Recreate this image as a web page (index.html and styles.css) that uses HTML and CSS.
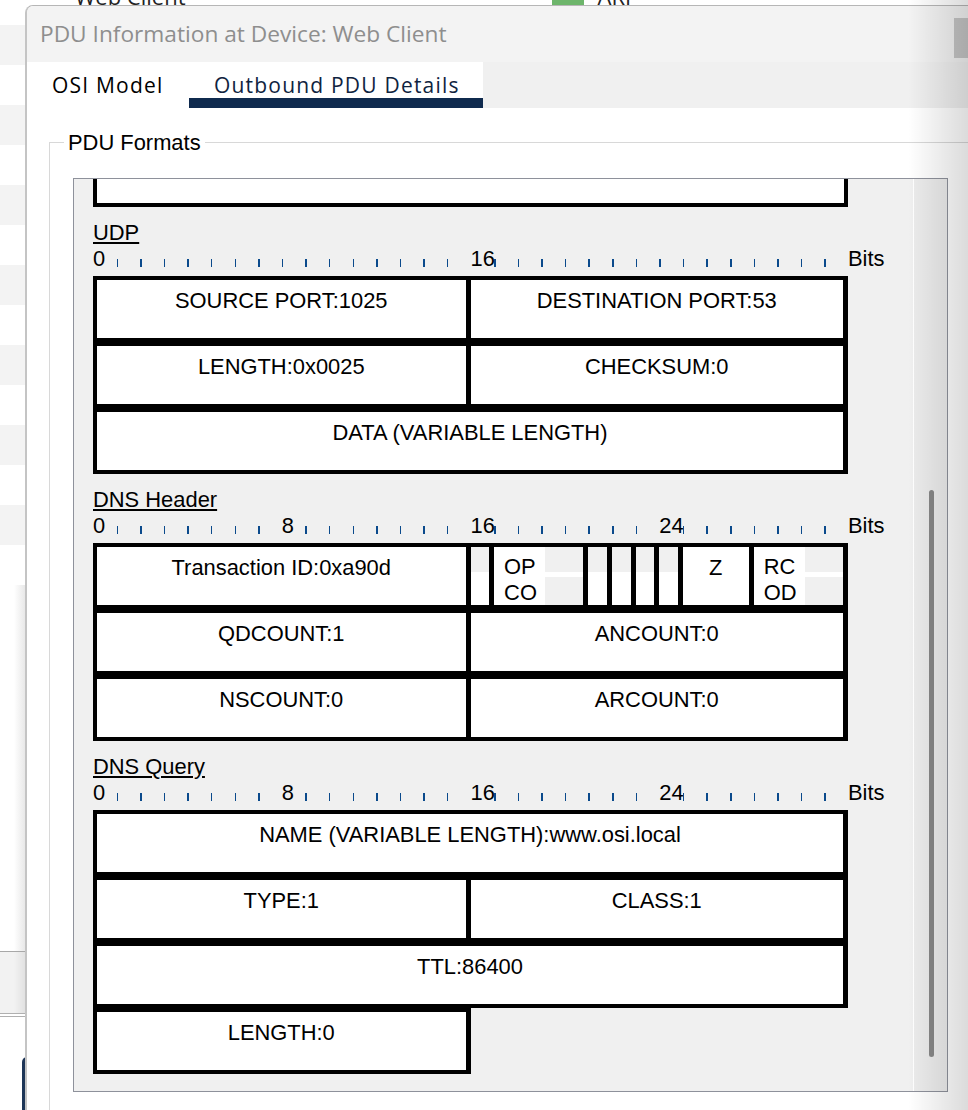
FILE: index.html
```html
<!DOCTYPE html>
<html>
<head>
<meta charset="utf-8">
<link rel="stylesheet" href="styles.css">
</head>
<body>
<div class="app">
  <div class="bg">
    <div class="bg-top">
      <span class="bg-webclient">Web Client</span>
      <span class="bg-green"></span>
      <span class="bg-arp">ARP</span>
    </div>
    <div class="bg-rows">
      <div class="bg-row"></div><div class="bg-row"></div><div class="bg-row"></div><div class="bg-row"></div>
      <div class="bg-row"></div><div class="bg-row"></div><div class="bg-row"></div><div class="bg-row"></div>
      <div class="bg-row"></div><div class="bg-row"></div><div class="bg-row"></div><div class="bg-row"></div>
      <div class="bg-row"></div><div class="bg-row"></div>
    </div>
    <div class="bg-gap"></div>
    <div class="bg-panel"></div>
    <div class="bg-rule"></div>
    <div class="bg-foot"><span class="bg-navy"></span></div>
  </div>

  <div class="dialog">
    <div class="titlebar">
      <span class="title">PDU Information at Device: Web Client</span>
      <span class="title-knob"></span>
    </div>
    <div class="tabs">
      <div class="tab tab-osi">OSI Model</div>
      <div class="tab tab-active">Outbound PDU Details</div>
      <div class="tab-fill"></div>
    </div>
    <div class="dlg-body">
      <fieldset class="group">
        <legend class="group-title">PDU Formats</legend>
        <div class="pane">
          <div class="pane-content">
            <div class="partial"></div>

            <div class="sec-title">UDP</div>
            <div class="ruler">
              <div class="scale">
                <span class="n">0</span><span class="t"></span><span class="t"></span><span class="t"></span>
                <span class="t"></span><span class="t"></span><span class="t"></span><span class="t"></span>
                <span class="t"></span><span class="t"></span><span class="t"></span><span class="t"></span>
                <span class="t"></span><span class="t"></span><span class="t"></span><span class="t"></span>
                <span class="n">16</span><span class="t"></span><span class="t"></span><span class="t"></span>
                <span class="t"></span><span class="t"></span><span class="t"></span><span class="t"></span>
                <span class="t"></span><span class="t"></span><span class="t"></span><span class="t"></span>
                <span class="t"></span><span class="t"></span><span class="t"></span><span class="t"></span>
              </div>
              <span class="bits">Bits</span>
            </div>
            <div class="pdu">
              <div class="row">
                <div class="c s16">SOURCE PORT:1025</div>
                <div class="c s16">DESTINATION PORT:53</div>
              </div>
              <div class="row">
                <div class="c s16">LENGTH:0x0025</div>
                <div class="c s16">CHECKSUM:0</div>
              </div>
              <div class="row">
                <div class="c s32">DATA (VARIABLE LENGTH)</div>
              </div>
            </div>

            <div class="sec-title">DNS Header</div>
            <div class="ruler">
              <div class="scale">
                <span class="n">0</span><span class="t"></span><span class="t"></span><span class="t"></span>
                <span class="t"></span><span class="t"></span><span class="t"></span><span class="t"></span>
                <span class="n">8</span><span class="t"></span><span class="t"></span><span class="t"></span>
                <span class="t"></span><span class="t"></span><span class="t"></span><span class="t"></span>
                <span class="n">16</span><span class="t"></span><span class="t"></span><span class="t"></span>
                <span class="t"></span><span class="t"></span><span class="t"></span><span class="t"></span>
                <span class="n">24</span><span class="t"></span><span class="t"></span><span class="t"></span>
                <span class="t"></span><span class="t"></span><span class="t"></span><span class="t"></span>
              </div>
              <span class="bits">Bits</span>
            </div>
            <div class="pdu">
              <div class="row">
                <div class="c s16">Transaction ID:0xa90d</div>
                <div class="c s1 flag"></div>
                <div class="c s4 split"><span class="split-text">OP<br>CO</span><span class="split-fill"></span></div>
                <div class="c s1 flag"></div>
                <div class="c s1 flag"></div>
                <div class="c s1 flag"></div>
                <div class="c s1 flag"></div>
                <div class="c s3">Z</div>
                <div class="c s4 split"><span class="split-text">RC<br>OD</span><span class="split-fill"></span></div>
              </div>
              <div class="row">
                <div class="c s16">QDCOUNT:1</div>
                <div class="c s16">ANCOUNT:0</div>
              </div>
              <div class="row">
                <div class="c s16">NSCOUNT:0</div>
                <div class="c s16">ARCOUNT:0</div>
              </div>
            </div>

            <div class="sec-title">DNS Query</div>
            <div class="ruler">
              <div class="scale">
                <span class="n">0</span><span class="t"></span><span class="t"></span><span class="t"></span>
                <span class="t"></span><span class="t"></span><span class="t"></span><span class="t"></span>
                <span class="n">8</span><span class="t"></span><span class="t"></span><span class="t"></span>
                <span class="t"></span><span class="t"></span><span class="t"></span><span class="t"></span>
                <span class="n">16</span><span class="t"></span><span class="t"></span><span class="t"></span>
                <span class="t"></span><span class="t"></span><span class="t"></span><span class="t"></span>
                <span class="n">24</span><span class="t"></span><span class="t"></span><span class="t"></span>
                <span class="t"></span><span class="t"></span><span class="t"></span><span class="t"></span>
              </div>
              <span class="bits">Bits</span>
            </div>
            <div class="pdu">
              <div class="row">
                <div class="c s32">NAME (VARIABLE LENGTH):www.osi.local</div>
              </div>
              <div class="row">
                <div class="c s16">TYPE:1</div>
                <div class="c s16">CLASS:1</div>
              </div>
              <div class="row">
                <div class="c s32">TTL:86400</div>
              </div>
              <div class="row">
                <div class="c s16">LENGTH:0</div>
              </div>
            </div>
          </div>
          <div class="vscroll"><span class="thumb"></span></div>
        </div>
      </fieldset>
    </div>
  </div>

  <div class="edge-fade"></div>
</div>
</body>
</html>
```

FILE: styles.css
```css
html, body {
  margin: 0;
  padding: 0;
  overflow: hidden;
  background: #ffffff;
}

body {
  font-family: "Liberation Sans", Arial, sans-serif;
  color: #000;
}

.app {
  position: relative;
  width: 968px;
  height: 1110px;
  overflow: hidden;
  background: #ffffff;
}

/* ---------- background application (behind dialog) ---------- */
.bg {
  display: flex;
  flex-direction: column;
  height: 1110px;
}

.bg-top {
  height: 25px;
  flex: none;
  display: flex;
  align-items: flex-start;
  font-family: "Open Sans", sans-serif;
  font-size: 22px;
  line-height: 24px;
  color: #222;
}

.bg-webclient {
  margin-left: 75px;
  margin-top: -16px;
}

.bg-green {
  margin-left: 366px;
  margin-top: -20px;
  width: 32px;
  height: 25px;
  background: #6db56b;
}

.bg-arp {
  margin-left: 14px;
  margin-top: -16px;
}

.bg-rows {
  display: flex;
  flex-direction: column;
  flex: none;
}

.bg-row {
  height: 40px;
  background: #f3f3f3;
}

.bg-row:nth-child(even) {
  background: #ffffff;
}

.bg-gap {
  height: 366px;
  flex: none;
  background: linear-gradient(to right, #ffffff 0, #ffffff 14px, #e6e6e6 26px);
}

.bg-panel {
  height: 61px;
  flex: none;
  border-top: 1px solid #a8a8a8;
  background: linear-gradient(to right, #f2f2f2 0, #f2f2f2 14px, #e0e0e0 26px);
}

.bg-rule {
  height: 2px;
  flex: none;
  border-top: 1px solid #b0b0b0;
  border-bottom: 1px solid #b0b0b0;
}

.bg-foot {
  flex: 1;
  display: flex;
  padding-top: 40px;
}

.bg-navy {
  margin-left: 22px;
  width: 8px;
  height: 60px;
  border-top-left-radius: 5px;
  background: #1d3557;
}

/* ---------- dialog ---------- */
.dialog {
  position: absolute;
  left: 25px;
  top: 5px;
  width: 943px;
  height: 1110px;
  box-sizing: border-box;
  border-left: 2px solid #c4c4c4;
  border-top: 1.5px solid #b6b6b6;
  border-top-left-radius: 8px;
  background: #ffffff;
  overflow: hidden;
}

.titlebar {
  height: 55.5px;
  box-sizing: border-box;
  background: #f3f3f3;
  display: flex;
  align-items: flex-start;
  padding: 13.5px 0 0 13px;
}

.title {
  font-family: "Open Sans", sans-serif;
  font-size: 22.7px;
  line-height: 28px;
  color: #8e8e8e;
}

.title-knob {
  margin-left: auto;
  margin-top: -2px;
  width: 14px;
  height: 40px;
  background: #c6c6c6;
}

.tabs {
  display: flex;
  height: 46px;
}

.tab {
  box-sizing: border-box;
  background: #ffffff;
  padding: 11px 0 0 25px;
  font-family: "Open Sans", sans-serif;
  font-size: 21px;
  letter-spacing: 1.2px;
  line-height: 24px;
  white-space: nowrap;
}

.tab-osi {
  width: 162px;
  color: #000;
}

.tab-active {
  width: 294px;
  color: #0f2340;
  border-bottom: 10px solid #0f2a4e;
}

.tab-fill {
  flex: 1;
  background: #f0f0f0;
}

.dlg-body {
  padding-left: 22px;
  background: #ffffff;
}

.group {
  margin: 22px 0 0 0;
  padding: 23px 0 0 14px;
  border: 1px solid #d8d8d8;
  border-right: 0;
  border-bottom: 0;
  min-width: 0;
  height: 1000px;
  box-sizing: border-box;
}

.group-title {
  padding: 0 4px;
  font-size: 21.9px;
  line-height: 25px;
  color: #000;
}

/* ---------- scroll pane ---------- */
.pane {
  margin-left: 9px;
  width: 875px;
  height: 914px;
  box-sizing: border-box;
  border: 1px solid #8e919b;
  background: #f0f0f0;
  display: flex;
}

.pane-content {
  flex: 1;
  padding-left: 19px;
  overflow: hidden;
  font-size: 21.9px;
}

.vscroll {
  width: 34px;
  border-left: 1px solid #ffffff;
  background: #ececec;
  display: flex;
  flex-direction: column;
  padding-top: 311px;
  box-sizing: border-box;
}

.thumb {
  margin-left: 15px;
  width: 5px;
  height: 567px;
  border-radius: 3px;
  background: #878787;
}

.partial {
  width: 755px;
  height: 28px;
  box-sizing: border-box;
  background: #ffffff;
  border: 4px solid #000;
  border-top: 0;
}

.sec-title {
  margin-top: 14px;
  height: 24px;
  line-height: 24px;
  text-decoration: underline;
  text-decoration-thickness: 2px;
  text-underline-offset: 2px;
}

.ruler {
  margin-top: 2px;
  margin-bottom: 5px;
  height: 24px;
  display: flex;
  line-height: 24px;
}

.scale {
  width: 755px;
  display: grid;
  grid-template-columns: repeat(32, minmax(0, 1fr));
}

.scale .n {
  white-space: nowrap;
}

.scale .t {
  display: flex;
  align-items: flex-end;
  padding-bottom: 4px;
  box-sizing: border-box;
  height: 24px;
}

.scale .t::before {
  content: "";
  width: 1.5px;
  height: 8px;
  background: #0b4a8c;
}

.bits {
  white-space: nowrap;
}

/* ---------- PDU boxes ---------- */
.pdu {
  width: 755px;
}

.row {
  display: grid;
  grid-template-columns: repeat(32, minmax(0, 1fr));
}

.c {
  height: 66px;
  box-sizing: border-box;
  background: #ffffff;
  border: 4px solid #000;
  border-left: 0;
  border-right-width: 5px;
  padding-top: 8px;
  line-height: 26px;
  text-align: center;
  white-space: nowrap;
  overflow: hidden;
}

.c:first-child {
  border-left: 4px solid #000;
}

.s1 { grid-column: span 1; }
.s3 { grid-column: span 3; }
.s4 { grid-column: span 4; }
.s16 { grid-column: span 16; }
.s32 { grid-column: span 32; }

.flag {
  padding-top: 0;
}

.flag::before {
  content: "";
  display: block;
  height: 25px;
  background: #f0f0f0;
}

.split {
  display: flex;
  padding-top: 0;
  text-align: left;
}

.split-text {
  width: 51px;
  flex: none;
  box-sizing: border-box;
  padding: 7px 0 0 10px;
  line-height: 26px;
}

.split-fill {
  flex: 1;
  display: flex;
  flex-direction: column;
}

.split-fill::before {
  content: "";
  height: 25px;
  background: #f0f0f0;
}

.split-fill::after {
  content: "";
  flex: 1;
  margin-top: 5px;
  background: #f0f0f0;
}

/* ---------- right window-edge fade ---------- */
.edge-fade {
  position: absolute;
  top: 0;
  right: 0;
  width: 60px;
  height: 1110px;
  background: linear-gradient(to right, rgba(0, 0, 0, 0), rgba(0, 0, 0, 0.14));
  pointer-events: none;
}
```
